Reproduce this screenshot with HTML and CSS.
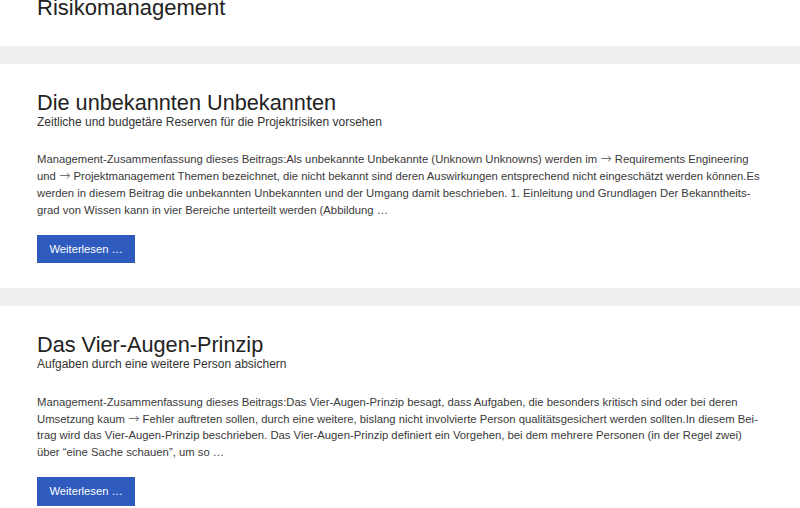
FILE: index.html
```html
<!DOCTYPE html>
<html lang="de">
<head>
<meta charset="utf-8">
<title>Risikomanagement</title>
<link rel="stylesheet" href="styles.css">
</head>
<body>
<header class="archive-header">
  <h1 class="archive-title">Risikomanagement</h1>
</header>
<main class="posts">
  <article class="post">
    <h2 class="post-title">Die unbekannten Unbekannten</h2>
    <p class="post-subtitle">Zeitliche und budgetäre Reserven für die Projektrisiken vorsehen</p>
    <p class="post-excerpt">Management-Zusammenfassung dieses Beitrags:Als unbekannte Unbekannte (Unknown Unknowns) werden im <span class="arrow">→</span> Requirements Engineering und <span class="arrow">→</span> Projektmanagement Themen bezeichnet, die nicht bekannt sind deren Auswirkungen entsprechend nicht eingeschätzt werden können.Es werden in diesem Beitrag die unbekannten Unbekannten und der Umgang damit beschrieben. 1. Einleitung und Grundlagen Der Bekanntheits&shy;grad von Wissen kann in vier Bereiche unterteilt werden (Abbildung …</p>
    <a class="more-link" href="#">Weiterlesen …</a>
  </article>
  <article class="post">
    <h2 class="post-title">Das Vier-Augen-Prinzip</h2>
    <p class="post-subtitle">Aufgaben durch eine weitere Person absichern</p>
    <p class="post-excerpt">Management-Zusammenfassung dieses Beitrags:Das Vier-Augen-Prinzip besagt, dass Aufgaben, die besonders kritisch sind oder bei deren Umsetzung kaum <span class="arrow">→</span> Fehler auftreten sollen, durch eine weitere, bislang nicht involvierte Person qualitätsgesichert werden sollten.In diesem Bei&shy;trag wird das Vier-Augen-Prinzip beschrieben. Das Vier-Augen-Prinzip definiert ein Vorgehen, bei dem mehrere Personen (in der Regel zwei) über “eine Sache schauen”, um so …</p>
    <a class="more-link" href="#">Weiterlesen …</a>
  </article>
</main>
</body>
</html>
```
FILE: styles.css
```css
* { box-sizing: border-box; }
html, body {
  margin: 0;
  padding: 0;
  background: #efefef;
  font-family: "Liberation Sans", Arial, sans-serif;
  color: #333;
}
.archive-header {
  background: #fff;
  height: 46px;
  padding: 0 37px;
  overflow: hidden;
}
.archive-title {
  margin: -5px 0 0;
  font-size: 22px;
  line-height: 1.2;
  font-weight: 400;
  color: #222;
}
.posts {
  display: flex;
  flex-direction: column;
  gap: 18px;
  padding-top: 18px;
}
.post {
  background: #fff;
  padding: 27px 37px 25px;
  display: flex;
  flex-direction: column;
  align-items: flex-start;
}
.post-title {
  margin: 0;
  font-size: 21.7px;
  line-height: 1.1;
  font-weight: 400;
  color: #222;
}
.post-subtitle {
  margin: 0;
  font-size: 12px;
  line-height: 1.3;
  color: #333;
}
.post-excerpt {
  margin: 21px 0 16px;
  font-size: 11.3px;
  line-height: 16.8px;
  color: #3a3a3a;
}
.arrow {
  font-family: "DejaVu Sans", sans-serif;
  font-weight: 200;
  font-size: 13.5px;
  line-height: 1;
  color: #555;
}
.more-link {
  display: inline-block;
  background: #2e5bbd;
  color: #fff;
  text-decoration: none;
  font-size: 11.2px;
  line-height: 16.8px;
  padding: 6px 12.5px;
}
```
